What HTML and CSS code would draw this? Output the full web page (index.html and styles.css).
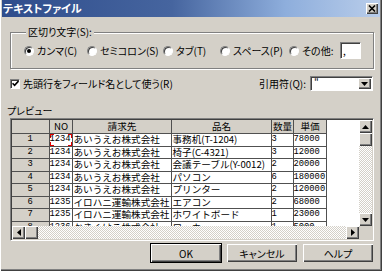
FILE: index.html
```html
<!DOCTYPE html>
<html lang="ja">
<head>
<meta charset="utf-8">
<title>テキストファイル</title>
<link rel="stylesheet" href="styles.css">
</head>
<body>
<div class="window">
  <div class="titlebar">
    <span class="title">テキストファイル</span>
    <span class="close"><svg width="8" height="7" viewBox="0 0 8 7"><path d="M1 0.5L7 6.5M7 0.5L1 6.5" stroke="#000" stroke-width="1.6"/></svg></span>
  </div>

  <div class="content">
    <fieldset class="group">
      <legend>区切り文字(S):</legend>
      <div class="radios">
        <label class="radio"><span class="dot on"></span>カンマ(C)</label>
        <label class="radio"><span class="dot"></span>セミコロン(S)</label>
        <label class="radio"><span class="dot"></span>タブ(T)</label>
        <label class="radio"><span class="dot"></span>スペース(P)</label>
        <label class="radio"><span class="dot"></span>その他:</label>
        <span class="textbox">,</span>
      </div>
    </fieldset>

    <div class="opts">
      <label class="check"><span class="box"><svg width="7" height="7" viewBox="0 0 7 7"><path d="M0.5 3.2L2.6 5.4L6.5 1" fill="none" stroke="#000" stroke-width="1.6"/></svg></span>先頭行をフィールド名として使う(R)</label>
      <label class="quote">引用符(Q):</label>
      <div class="combo">
        <span class="combo-val">"</span>
        <span class="sbtn"><svg width="7" height="4" viewBox="0 0 7 4"><path d="M0 0H7L3.5 4Z"/></svg></span>
      </div>
    </div>

    <div class="preview-label">プレビュー</div>

    <div class="grid">
      <div class="cells">
        <table class="sheet">
          <colgroup>
            <col class="c-head"><col class="c-no"><col class="c-to"><col class="c-item"><col class="c-qty"><col class="c-price">
          </colgroup>
          <thead>
            <tr><th></th><th>NO</th><th>請求先</th><th>品名</th><th>数量</th><th>単価</th></tr>
          </thead>
          <tbody>
            <tr><th class="n">1</th><td class="n focus">1234</td><td>あいうえお株式会社</td><td>事務机(T-1204)</td><td class="n">3</td><td class="n">78000</td></tr>
            <tr><th class="n">2</th><td class="n">1234</td><td>あいうえお株式会社</td><td>椅子(C-4321)</td><td class="n">3</td><td class="n">12000</td></tr>
            <tr><th class="n">3</th><td class="n">1234</td><td>あいうえお株式会社</td><td>会議テーブル(Y-0012)</td><td class="n">2</td><td class="n">20000</td></tr>
            <tr><th class="n">4</th><td class="n">1234</td><td>あいうえお株式会社</td><td>パソコン</td><td class="n">6</td><td class="n">180000</td></tr>
            <tr><th class="n">5</th><td class="n">1234</td><td>あいうえお株式会社</td><td>プリンター</td><td class="n">2</td><td class="n">120000</td></tr>
            <tr><th class="n">6</th><td class="n">1235</td><td>イロハニ運輸株式会社</td><td>エアコン</td><td class="n">2</td><td class="n">68000</td></tr>
            <tr><th class="n">7</th><td class="n">1235</td><td>イロハニ運輸株式会社</td><td>ホワイトボード</td><td class="n">1</td><td class="n">23000</td></tr>
            <tr><th class="n">8</th><td class="n">1236</td><td>かきくけこ株式会社</td><td>ロッカー</td><td class="n">1</td><td class="n">5000</td></tr>
          </tbody>
        </table>
      </div>
      <div class="vscroll">
        <span class="sbtn"><svg width="7" height="4" viewBox="0 0 7 4"><path d="M0 4H7L3.5 0Z"/></svg></span>
        <span class="thumb"></span>
        <span class="track"></span>
        <span class="sbtn"><svg width="7" height="4" viewBox="0 0 7 4"><path d="M0 0H7L3.5 4Z"/></svg></span>
      </div>
      <div class="hscroll">
        <span class="sbtn"><svg width="4" height="7" viewBox="0 0 4 7"><path d="M4 0V7L0 3.5Z"/></svg></span>
        <span class="thumb"></span>
        <span class="track"></span>
        <span class="sbtn"><svg width="4" height="7" viewBox="0 0 4 7"><path d="M0 0V7L4 3.5Z"/></svg></span>
      </div>
      <div class="corner"></div>
    </div>

    <div class="buttons">
      <button class="btn default">OK</button>
      <button class="btn">キャンセル</button>
      <button class="btn">ヘルプ</button>
    </div>
  </div>
</div>
</body>
</html>
```

FILE: styles.css
```css
* {
  box-sizing: border-box;
}

body {
  margin: 0;
  width: 382px;
  height: 271px;
  overflow: hidden;
  background: #d4d0c8;
  color: #000;
  font-family: "Noto Sans CJK JP", sans-serif;
  font-size: 10px;
  font-feature-settings: "palt";
}

.window {
  height: 271px;
  padding: 0 2px;
  box-shadow: inset 1px 0 #fff, inset -1px -1px #404040, inset -2px -2px #808080;
}

.titlebar {
  height: 17px;
  display: flex;
  align-items: center;
  justify-content: space-between;
  padding: 0 2px 0 1px;
  background: linear-gradient(90deg, #2f4d8c 0%, #46659f 45%, #8eaedc 75%, #b9cdea 100%);
}

.title {
  color: #fff;
  font-weight: bold;
  font-size: 11px;
  line-height: 17px;
}

.close {
  width: 12px;
  height: 11px;
  display: flex;
  align-items: center;
  justify-content: center;
  background: #d4d0c8;
  box-shadow: inset 1px 1px #fff, inset -1px -1px #404040, inset -2px -2px #808080;
}

.content {
  padding: 8px 6px 0 8px;
}

/* group box */
.group {
  margin: 0;
  min-width: 0;
  padding: 3px 8px 9px 13px;
  border: 1px solid #808080;
  box-shadow: inset 1px 1px #fff, 1px 1px #fff;
}

.group legend {
  padding: 0 2px;
  margin-left: 2px;
  line-height: 14px;
  background: #d4d0c8;
}

.radios {
  display: grid;
  grid-template-columns: 63px 76px 57px 69px 51px 21px;
  align-items: center;
  height: 17px;
}

.radio {
  display: flex;
  align-items: center;
  gap: 3px;
  white-space: nowrap;
}

.dot {
  width: 10px;
  height: 10px;
  border-radius: 50%;
  background: #fff;
  border: 1px solid;
  border-color: #808080 #fff #fff #808080;
  box-shadow: inset 1px 1px #404040;
  display: flex;
  align-items: center;
  justify-content: center;
}

.dot.on::after {
  content: "";
  width: 4px;
  height: 4px;
  border-radius: 50%;
  background: #000;
}

.textbox {
  height: 17px;
  background: #fff;
  border: 1px solid;
  border-color: #808080 #fff #fff #808080;
  box-shadow: inset 1px 1px #404040;
  padding: 2px 0 0 2px;
  line-height: 12px;
}

/* checkbox + quote row */
.opts {
  display: flex;
  align-items: center;
  height: 15px;
  margin-top: 7px;
}

.check {
  display: flex;
  align-items: center;
  gap: 3px;
}

.box {
  width: 10px;
  height: 10px;
  background: #fff;
  border: 1px solid;
  border-color: #808080 #fff #fff #808080;
  box-shadow: inset 1px 1px #404040;
  display: flex;
  align-items: center;
  justify-content: center;
}

.quote {
  margin-left: auto;
  margin-right: 4px;
}

.combo {
  width: 63px;
  height: 15px;
  margin-right: 1px;
  display: flex;
  align-items: center;
  justify-content: space-between;
  background: #fff;
  border: 1px solid;
  border-color: #808080 #fff #fff #808080;
  box-shadow: inset 1px 1px #404040;
  padding: 1px 1px 1px 3px;
}

.combo-val {
  align-self: flex-start;
  line-height: 10px;
}

.combo .sbtn {
  height: 11px;
}

.preview-label {
  margin: 14px 0 0 -3px;
  line-height: 12px;
}

/* preview grid */
.grid {
  margin-top: 1px;
  height: 123px;
  display: grid;
  grid-template-columns: 1fr 13px;
  grid-template-rows: 1fr 13px;
  border: 1px solid;
  border-color: #808080 #fff #fff #808080;
  box-shadow: inset 1px 1px #404040, inset -1px -1px #d4d0c8;
  padding: 1px;
}

.cells {
  background: #fff;
  overflow: hidden;
  min-height: 0;
}

.sheet {
  border-collapse: collapse;
  table-layout: fixed;
  width: 314px;
  font-size: 9.6px;
  font-feature-settings: normal;
}

.c-head { width: 37px; }
.c-no { width: 23px; }
.c-to { width: 99px; }
.c-item { width: 100px; }
.c-qty { width: 22px; }
.c-price { width: 33px; }

.sheet tr {
  height: 13px;
}

.sheet tbody tr:nth-child(even) {
  height: 12px;
}

.sheet th,
.sheet td {
  padding: 0 0 0 1px;
  border: 1px solid #505050;
  line-height: 11px;
  white-space: nowrap;
  overflow: hidden;
  font-weight: normal;
  text-align: left;
}

.sheet thead th {
  border-top: none;
  text-align: center;
}

.sheet th:first-child {
  border-left: none;
}

.sheet th {
  background: #d4d0c8;
}

.sheet .n {
  font-family: "Liberation Mono", monospace;
  font-size: 8.8px;
  padding-left: 0;
}

.sheet th.n {
  text-align: center;
}

.sheet .focus {
  background:
    linear-gradient(#e00000, #e00000) left top / 4px 1px no-repeat,
    linear-gradient(#e00000, #e00000) left top / 1px 4px no-repeat,
    linear-gradient(#e00000, #e00000) right top / 4px 1px no-repeat,
    linear-gradient(#e00000, #e00000) right top / 1px 4px no-repeat,
    linear-gradient(#e00000, #e00000) left bottom / 4px 1px no-repeat,
    linear-gradient(#e00000, #e00000) left bottom / 1px 4px no-repeat,
    linear-gradient(#e00000, #e00000) right bottom / 4px 1px no-repeat,
    linear-gradient(#e00000, #e00000) right bottom / 1px 4px no-repeat,
    #fff;
}

/* scrollbars */
.vscroll,
.hscroll {
  display: flex;
  min-height: 0;
}

.vscroll {
  flex-direction: column;
}

.sbtn {
  flex: none;
  width: 13px;
  height: 13px;
  display: flex;
  align-items: center;
  justify-content: center;
  background: #d4d0c8;
  box-shadow: inset 1px 1px #fff, inset -1px -1px #404040, inset -2px -2px #808080;
}

.thumb {
  flex: none;
  width: 13px;
  height: 13px;
  background: #d4d0c8;
  box-shadow: inset 1px 1px #fff, inset -1px -1px #404040, inset -2px -2px #808080;
}

.track {
  flex: 1;
  background: repeating-conic-gradient(#fff 0 25%, #d4d0c8 0 50%) 0 0 / 2px 2px;
}

.corner {
  background: #d4d0c8;
}

/* buttons */
.buttons {
  display: flex;
  justify-content: flex-end;
  gap: 6px;
  margin-top: 3px;
  padding-right: 1px;
}

.btn {
  width: 70px;
  height: 18px;
  padding: 0;
  border: none;
  background: #d4d0c8;
  font: inherit;
  color: #000;
  box-shadow: inset 1px 1px #fff, inset -1px -1px #404040, inset -2px -2px #808080;
}

.btn.default {
  box-shadow: 0 0 0 1px #000, inset 1px 1px #fff, inset -1px -1px #404040, inset -2px -2px #808080;
}
```
